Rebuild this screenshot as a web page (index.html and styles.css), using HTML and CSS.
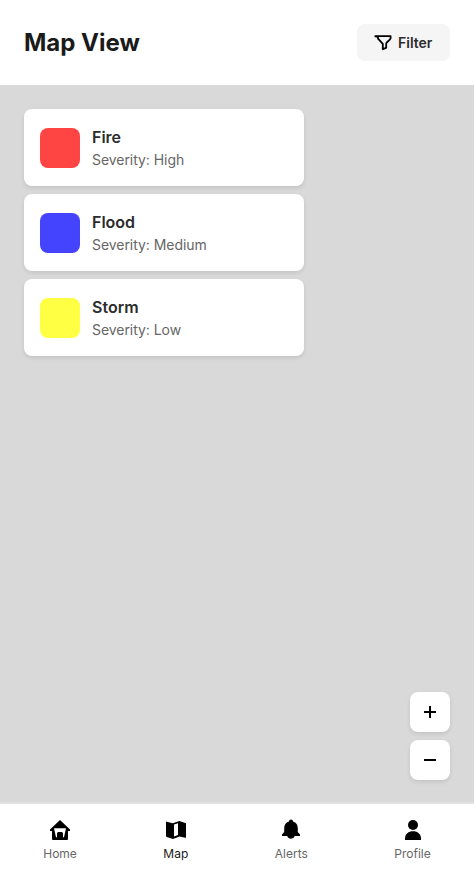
FILE: index.html
```html
<!DOCTYPE html>
<html lang="en">
<head>
<meta charset="utf-8">
<title>Map View</title>
<link rel="stylesheet" href="styles.css">
</head>
<body>
<div class="app">
  <header class="header">
    <h1>Map View</h1>
    <button class="filter">
      <svg width="20" height="20" viewBox="0 0 20 20" fill="none" stroke="#000" stroke-width="1.8" stroke-linejoin="round" stroke-linecap="round"><path d="M2.3 3.1H17.6V5.3C17.6 7 13.2 8.8 13.2 10.4V14.8L9.8 16.2V10.8L5 5.6V3.8L2.3 3.4"/></svg>
      <span>Filter</span>
    </button>
  </header>
  <main class="map">
    <div class="legend">
      <div class="card">
        <div class="swatch fire"></div>
        <div><div class="name">Fire</div><div class="severity">Severity: High</div></div>
      </div>
      <div class="card">
        <div class="swatch flood"></div>
        <div><div class="name">Flood</div><div class="severity">Severity: Medium</div></div>
      </div>
      <div class="card">
        <div class="swatch storm"></div>
        <div><div class="name">Storm</div><div class="severity">Severity: Low</div></div>
      </div>
    </div>
    <div class="zoom">
      <button aria-label="Zoom in"><svg width="24" height="24" viewBox="0 0 24 24" stroke="#000" stroke-width="2"><path d="M6 12H18M12 6V18"/></svg></button>
      <button aria-label="Zoom out"><svg width="24" height="24" viewBox="0 0 24 24" stroke="#000" stroke-width="2"><path d="M6 12H18"/></svg></button>
    </div>
  </main>
  <nav class="nav">
    <a class="tab">
      <svg width="24" height="24" viewBox="0 0 24 24"><path fill-rule="evenodd" d="M12 2L22 11.5V13H20V21Q20 22 19 22H5Q4 22 4 21V13H2V11.5ZM6 10.2L8 19.2H9V15.5Q9 14 10.5 14H13.5Q15 14 15 15.5V19.2H16L18 10.2Z"/></svg>
      <span>Home</span>
    </a>
    <a class="tab active">
      <svg width="24" height="24" viewBox="0 0 24 24"><path fill-rule="evenodd" d="M2 4.2Q2 3.4 2.8 3.7L8.8 5.2L15.3 3L21.3 4.9Q22 5.1 22 5.8V19.2Q22 20 21.3 19.8L15.5 18.5L9 21L2.7 18.9Q2 18.7 2 18ZM10 6.6V18.5L14 17V5.2Z"/></svg>
      <span>Map</span>
    </a>
    <a class="tab">
      <svg width="24" height="24" viewBox="0 0 24 24"><path d="M10 3.5A2 2 0 0 1 14 3.5C17.3 4.4 18.8 7 18.8 10.3V14L21 16.6V18H15.8A4 4 0 0 1 8.2 18H3V16.6L5.2 14V10.3C5.2 7 6.7 4.4 10 3.5Z"/></svg>
      <span>Alerts</span>
    </a>
    <a class="tab">
      <svg width="24" height="24" viewBox="0 0 24 24"><circle cx="12" cy="7" r="5"/><path d="M4 22V20.5C4 15.8 7.5 13.2 12 13.2S20 15.8 20 20.5V22Z"/></svg>
      <span>Profile</span>
    </a>
  </nav>
</div>
</body>
</html>
```

FILE: styles.css
```css
* { box-sizing: border-box; }
body { margin: 0; background: #fff; font-family: Inter, sans-serif; line-height: 1.5; }
button { border: 0; padding: 0; font: inherit; }
svg { display: block; flex: none; }
.app { width: 474px; height: 879px; display: flex; flex-direction: column; background: #fff; }
.header { height: 85px; padding: 24px; display: flex; align-items: center; justify-content: space-between; }
h1 { margin: 0; font-size: 24px; font-weight: 700; line-height: 36px; color: #1a1a1a; }
.filter { width: 93px; height: 37px; padding-left: 16px; display: flex; align-items: center; gap: 5px; border-radius: 8px; background: #f5f5f5; color: #2c2c2c; font-size: 14px; font-weight: 600; }
.map { flex: 1; padding: 24px 24px 22px; display: flex; flex-direction: column; justify-content: space-between; background: #d9d9d9; }
.legend { width: 280px; display: flex; flex-direction: column; gap: 8px; }
.card { height: 77px; padding: 16px; display: flex; align-items: center; gap: 12px; background: #fff; border-radius: 8px; box-shadow: 0 2px 4px rgba(0, 0, 0, .1); }
.swatch { width: 40px; height: 40px; border-radius: 8px; position: relative; top: .5px; }
.fire { background: #f44; }
.flood { background: #44f; }
.storm { background: #ff4; }
.name { font-size: 16px; font-weight: 600; line-height: 24px; color: #2c2c2c; }
.severity { font-size: 14px; line-height: 21px; letter-spacing: -.05px; color: #666; }
.zoom { align-self: flex-end; display: flex; flex-direction: column; gap: 8px; }
.zoom button { width: 40px; height: 40px; display: flex; align-items: center; justify-content: center; background: #fff; border-radius: 8px; box-shadow: 0 2px 4px rgba(0, 0, 0, .1); }
.nav { height: 77px; padding-top: 14px; border-top: 2px solid #e0e0e0; display: flex; justify-content: space-around; background: #fff; }
.tab { display: flex; flex-direction: column; align-items: center; gap: 3px; font-size: 12px; line-height: 18px; color: #666; }
.tab.active { color: #1a1a1a; }
```
